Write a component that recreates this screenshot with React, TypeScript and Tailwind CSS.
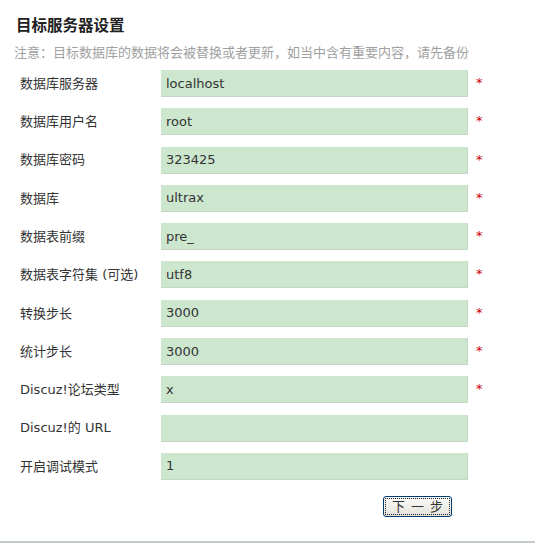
const fields = [
  { label: "数据库服务器", value: "localhost", required: true },
  { label: "数据库用户名", value: "root", required: true },
  { label: "数据库密码", value: "323425", required: true },
  { label: "数据库", value: "ultrax", required: true },
  { label: "数据表前缀", value: "pre_", required: true },
  { label: "数据表字符集 (可选)", value: "utf8", required: true },
  { label: "转换步长", value: "3000", required: true },
  { label: "统计步长", value: "3000", required: true },
  { label: "Discuz!论坛类型", value: "x", required: true },
  { label: "Discuz!的 URL", value: "", required: false },
  { label: "开启调试模式", value: "1", required: false },
];

export default function App() {
  return (
    <div className="w-[535px] h-[553px] bg-white text-[#333] font-['DejaVu_Sans','Noto_Sans_CJK_SC',sans-serif]">
      <h2 className="pl-[16px] pt-[17px] text-[15.5px] leading-[18px] font-bold text-[#222]">
        目标服务器设置
      </h2>
      <p className="pl-[14px] mt-[10px] text-[13px] leading-[16px] text-[#a0a0a0] whitespace-nowrap">
        注意：目标数据库的数据将会被替换或者更新，如当中含有重要内容，请先备份
      </p>

      <div className="mt-[9px] flex flex-col gap-[11.3px]">
        {fields.map((f) => (
          <div key={f.label} className="flex items-center h-[27px]">
            <label className="w-[161px] pl-[20px] text-[13px] text-[#333] whitespace-nowrap">
              {f.label}
            </label>
            <input
              type="text"
              defaultValue={f.value}
              className="w-[307px] h-[27px] px-[5px] bg-[#cde7cf] border-0 border-b border-r border-[#c6d6c6] text-[13px] text-[#333] outline-none"
            />
            {f.required && (
              <span className="ml-[8px] text-[13px] text-[#cc0000] leading-none -mt-[2px]">*</span>
            )}
          </div>
        ))}
      </div>

      <div className="flex pl-[383px] mt-[16px]">
        <button
          type="button"
          className="w-[69px] h-[21px] rounded-[3px] border border-[#003c74] bg-gradient-to-b from-[#fcfcfa] to-[#e3e2da] p-[1px]"
        >
          <span className="flex items-center justify-center gap-[6px] w-full h-full border border-dotted border-[#222] text-[13px] leading-none text-[#333]">
            <span>下</span>
            <span>一</span>
            <span>步</span>
          </span>
        </button>
      </div>

      <div className="mt-[24px] h-[2px] bg-[#c3cbcf]" />
    </div>
  );
}
